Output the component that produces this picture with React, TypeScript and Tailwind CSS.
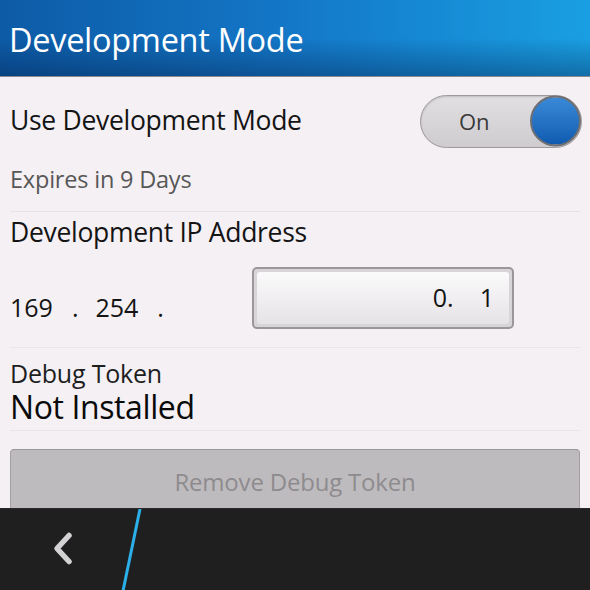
import React from "react";

export default function App() {
  const font = { fontFamily: '"Open Sans", "Noto Sans", sans-serif' };
  return (
    <div className="w-[590px] h-[590px] overflow-hidden flex flex-col bg-[#f4f0f4]" style={font}>
      {/* Header */}
      <div className="relative h-[77px] shrink-0 bg-gradient-to-r from-[#0d5ba6] via-[#1478c8] to-[#1a9fe2] flex items-center px-[9px] border-b border-[#8a8a90]">
        <div className="absolute inset-0 bg-gradient-to-b from-transparent via-transparent to-[rgba(0,20,60,0.35)]" />
        <span className="relative text-white text-[32.5px] leading-none mt-[4px] tracking-[-0.3px]">Development Mode</span>
      </div>

      {/* Content */}
      <div className="flex-1 flex flex-col px-[10px] overflow-hidden">
        <div className="flex items-center justify-between h-[88px] shrink-0">
          <span className="text-[26.5px] text-[#141414] tracking-[-0.3px]">Use Development Mode</span>
          <div className="relative w-[162px] h-[53px] rounded-full border border-[#9c9a9c] bg-gradient-to-b from-[#e2dfe2] to-[#cfcccf] shadow-[inset_0_1px_2px_rgba(0,0,0,0.15)] -mr-[2px]">
            <span className="absolute left-[38px] top-1/2 -translate-y-1/2 text-[22px] text-[#3a3a3a]">On</span>
            <div className="absolute right-0 top-1/2 -translate-y-1/2 w-[51px] h-[51px] rounded-full border-[2px] border-[#6f6f73] bg-gradient-to-b from-[#3a8ad8] to-[#0f5bb0]" />
          </div>
        </div>
        <div className="h-[47px] shrink-0 flex items-start border-b border-[#e6e2e6]">
          <span className="text-[23.5px] leading-[28px] text-[#575757] tracking-[-0.2px]">Expires in 9 Days</span>
        </div>
        <div className="pt-[2px] h-[40px] shrink-0">
          <span className="text-[26.5px] leading-[36px] text-[#141414] tracking-[-0.3px]">Development IP Address</span>
        </div>
        <div className="flex items-start h-[96px] shrink-0 border-b border-[#e9e5e9]">
          <div className="w-[242px] flex items-center text-[25px] leading-[34px] text-[#141414] mt-[38px]">
            <span>169</span>
            <span className="ml-[19px]">.</span>
            <span className="ml-[17px]">254</span>
            <span className="ml-[19px]">.</span>
          </div>
          <div className="mt-[15px] w-[262px] h-[62px] rounded-[5px] border-[2px] border-[#9a979a] bg-[#d8d5d8] p-[3px]">
            <div className="w-full h-full rounded-[3px] bg-gradient-to-b from-[#fbfafb] to-[#e6e3e6] flex items-center justify-end pr-[15px] text-[25px] text-[#141414]">
              <span>0.</span>
              <span className="ml-[26px]">1</span>
            </div>
          </div>
        </div>
        <div className="flex flex-col pt-[10px] h-[83px] shrink-0 border-b border-[#e9e5e9]">
          <span className="text-[25px] leading-[30px] text-[#1e1e1e] tracking-[-0.2px]">Debug Token</span>
          <span className="text-[32px] leading-[38px] text-[#0a0a0a] tracking-[-0.4px]">Not Installed</span>
        </div>
        <div className="pt-[18px] shrink-0">
          <div className="h-[66px] rounded-[4px] border border-[#a3a0a3] border-t-[#9a979a] bg-[#bebbbe] flex items-center justify-center">
            <span className="text-[24px] text-[#8e8b8e] tracking-[-0.2px]">Remove Debug Token</span>
          </div>
        </div>
      </div>

      {/* Bottom bar */}
      <div className="relative h-[82px] shrink-0 bg-[#1f1f1f] border-t border-[#2a2a2a]">
        <svg className="absolute left-[50px] top-[22px]" width="26" height="36" viewBox="0 0 26 36">
          <path d="M19 4.5 L7 17.5 L19 30.5" fill="none" stroke="#d4d2d4" strokeWidth="5.5" strokeLinecap="round" strokeLinejoin="round" />
        </svg>
        <svg className="absolute left-0 top-0" width="200" height="82" viewBox="0 0 200 82">
          <line x1="140" y1="0" x2="123" y2="82" stroke="#2bb0ea" strokeWidth="3" />
        </svg>
      </div>
    </div>
  );
}
